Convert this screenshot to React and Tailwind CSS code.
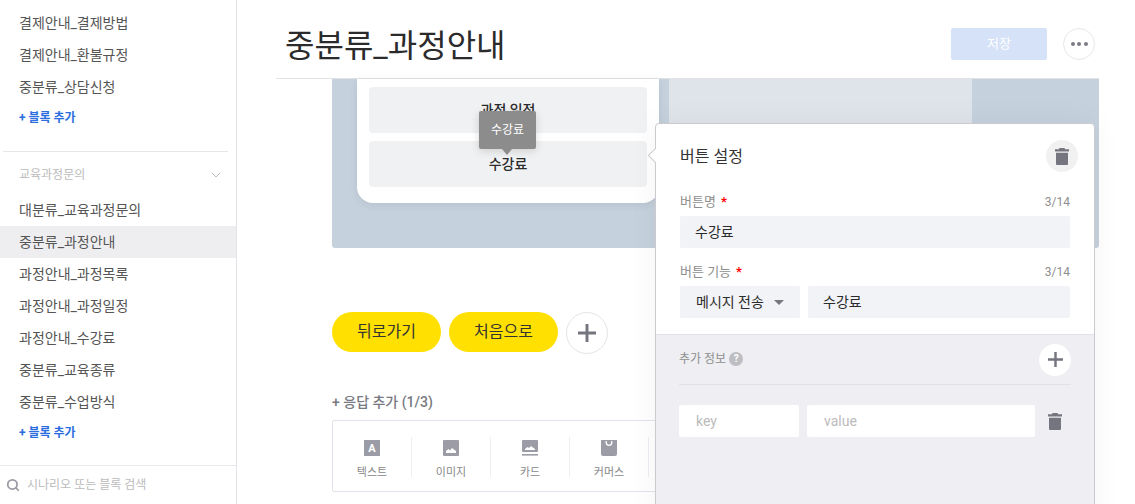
import React from 'react';
import { ChevronDown, Search } from 'lucide-react';

const TrashIcon = ({ className }) => (
  <svg viewBox="0 0 14 17" className={className} fill="currentColor">
    <path d="M4.5 0h5l.6 1.2H14v2.3H0V1.2h3.9zM1 4.8h12V16a1 1 0 0 1-1 1H2a1 1 0 0 1-1-1z" />
  </svg>
);

const PlusIcon = ({ className }) => (
  <svg viewBox="0 0 16 16" className={className} fill="currentColor">
    <path d="M6.7 0h2.6v6.7H16v2.6H9.3V16H6.7V9.3H0V6.7h6.7z" />
  </svg>
);

const Star = () => <span className="text-[#ff0000] text-[13px] ml-[5px] font-bold">*</span>;

const SideItem = ({ label, active }) => (
  <div className={`h-8 flex items-center pl-[19px] text-[14px] text-[#555] ${active ? 'bg-[#eeeef1]' : ''}`}>
    {label}
  </div>
);

const AddBlock = () => (
  <div className="h-7 pt-[2px] flex items-center pl-[19px] text-[12px] font-bold text-[#2a6ee0]">+ 블록 추가</div>
);

function Sidebar() {
  return (
    <aside className="w-[237px] shrink-0 h-full border-r border-[#e3e3e9] flex flex-col bg-white">
      <div className="flex-1 pt-[7px]">
        <SideItem label="결제안내_결제방법" />
        <SideItem label="결제안내_환불규정" />
        <SideItem label="중분류_상담신청" />
        <AddBlock />
        <div className="mt-[20px] mx-[3px] w-[225px] border-t border-[#e6e6ea]" />
        <div className="h-[42px] pt-[3px] flex items-center justify-between pl-[19px] pr-[13px] text-[12px] text-[#bbb]">
          <span>교육과정문의</span>
          <ChevronDown size={16} strokeWidth={1.5} className="text-[#bbb] -mr-[1px]" />
        </div>
        <SideItem label="대분류_교육과정문의" />
        <SideItem label="중분류_과정안내" active />
        <SideItem label="과정안내_과정목록" />
        <SideItem label="과정안내_과정일정" />
        <SideItem label="과정안내_수강료" />
        <SideItem label="중분류_교육종류" />
        <SideItem label="중분류_수업방식" />
        <AddBlock />
      </div>
      <div className="h-[39px] shrink-0 border-t border-[#e9e9ec] flex items-center pl-[6px] gap-[7px] text-[12px] text-[#bbb]">
        <Search size={14} strokeWidth={3} className="text-[#9a9ba3]" />
        <span>시나리오 또는 블록 검색</span>
      </div>
    </aside>
  );
}

const ReplyIcon = ({ type }) => {
  if (type === 'text') {
    return (
      <div className="w-4 h-4 bg-[#9b9ca5] flex items-center justify-center text-white text-[11px] font-bold leading-none">A</div>
    );
  }
  if (type === 'commerce') {
    return (
      <svg viewBox="0 0 16 16" className="w-4 h-4">
        <path d="M0 0h16v14a2 2 0 0 1-2 2H2a2 2 0 0 1-2-2z" fill="#9b9ca5" />
        <path d="M5.2 1v1.6a2.8 2.8 0 0 0 5.6 0V1" fill="none" stroke="#fff" strokeWidth="1.3" />
      </svg>
    );
  }
  return (
    <svg viewBox="0 0 16 16" className="w-4 h-4">
      <rect width="16" height={type === 'card' ? 12 : 16} rx="1" fill="#9b9ca5" />
      {type === 'card' ? (
        <>
          <path d="M3 10V9l2.5-2L7 8l2-2 4 3v1z" fill="#fff" />
          <rect y="14" width="16" height="1.6" fill="#9b9ca5" />
        </>
      ) : (
        <path d="M3 13v-2l2.5-2L7 10.500l2-2.500 4 3v2z" fill="#fff" />
      )}
    </svg>
  );
};

const ReplyCell = ({ type, label }) => (
  <div className="w-[79px] shrink-0 h-10 border-r border-[#eeeef2] flex flex-col items-center justify-start text-[11px] text-[#888] leading-none">
    <div className="mt-[3px]"><ReplyIcon type={type} /></div>
    <span className="mt-[11px]">{label}</span>
  </div>
);

function Popover() {
  return (
    <div className="absolute left-[655px] top-[123px] w-[440px] h-[420px] bg-white border border-[#cacacf] rounded-[4px] shadow-[0_0_30px_rgba(0,0,0,0.05)]">
      <div className="absolute -left-[6px] top-[26px] w-[11px] h-[11px] rotate-45 bg-white border-l border-b border-[#cacacf]" />
      <div className="relative px-6">
        <div className="flex items-center justify-between h-[32px] mt-[16px] -mr-[8px]">
          <span className="text-[16px] text-[#333] pt-[2px]">버튼 설정</span>
          <div className="w-8 h-8 rounded-full bg-[#f1f1f1] flex items-center justify-center">
            <TrashIcon className="w-[14px] h-[17px] text-[#74757f]" />
          </div>
        </div>
        <div className="mt-[20px] flex items-center justify-between h-[20px] text-[12px] text-[#8e8e8e]">
          <span className="text-[13px] flex items-center">버튼명<Star /></span>
          <span>3/14</span>
        </div>
        <div className="mt-[4px] h-8 bg-[#f2f3f7] rounded-[2px] flex items-center pl-[15px] text-[14px] text-[#2b2b2b]">수강료</div>
        <div className="mt-[14px] flex items-center justify-between h-[20px] text-[12px] text-[#8e8e8e]">
          <span className="text-[13px] flex items-center">버튼 기능<Star /></span>
          <span>3/14</span>
        </div>
        <div className="mt-[4px] flex gap-2">
          <div className="w-[120px] h-8 bg-[#f2f3f7] rounded-[2px] flex items-center pl-4 text-[14px] text-[#2b2b2b]">
            메시지 전송
            <span className="ml-[10px] w-0 h-0 border-x-[5px] border-x-transparent border-t-[5px] border-t-[#77787f]" />
          </div>
          <div className="flex-1 h-8 bg-[#f2f3f7] rounded-[2px] flex items-center pl-[15px] text-[14px] text-[#2b2b2b]">수강료</div>
        </div>
      </div>
      <div className="mt-4 h-[200px] bg-[#eeeef3] border-t border-[#e2e2e6] pl-[23px] pr-[23px]">
        <div className="h-[50px] border-b border-[#e2e2e6] flex items-center justify-between">
          <span className="flex items-center text-[12px] text-[#8e8e8e] gap-[3px] -mt-[2px]">
            추가 정보
            <span className="w-[14px] h-[14px] rounded-full bg-[#bdbdc2] text-white text-[10px] font-bold flex items-center justify-center">?</span>
          </span>
          <div className="w-8 h-8 rounded-full bg-white flex items-center justify-center">
            <PlusIcon className="w-[15px] h-[15px] text-[#74757f]" />
          </div>
        </div>
        <div className="mt-[20px] flex items-center gap-2">
          <div className="w-[120px] h-8 bg-white rounded-[2px] flex items-center pl-[17px] text-[14px] text-[#bbb]">key</div>
          <div className="w-[228px] h-8 bg-white rounded-[2px] flex items-center pl-[17px] text-[14px] text-[#bbb]">value</div>
          <TrashIcon className="w-[14px] h-[17px] ml-[5px] text-[#74757f]" />
        </div>
      </div>
    </div>
  );
}

export default function App() {
  return (
    <div className="relative w-[1135px] h-[504px] overflow-hidden flex bg-white font-['Roboto','Noto_Sans_CJK_KR',sans-serif]">
      <Sidebar />
      <main className="ml-[39px] w-[823px] shrink-0">
        <header className="h-[79px] border-b border-[#e2e2e2] flex items-start pl-[9px] pr-1 pt-[28px]">
          <h1 className="text-[32px] text-[#2b2b2b] leading-none pt-[2px] font-normal">중분류_과정안내</h1>
          <button className="ml-auto w-[96px] h-8 bg-[#d6e2f8] rounded-[2px] text-white text-[13px]">저장</button>
          <button className="ml-4 w-8 h-8 rounded-full border border-[#e8e8ea] flex items-center justify-center gap-[2.5px]">
            <span className="w-[4px] h-[4px] rounded-full bg-[#7b7c85]" />
            <span className="w-[4px] h-[4px] rounded-full bg-[#7b7c85]" />
            <span className="w-[4px] h-[4px] rounded-full bg-[#7b7c85]" />
          </button>
        </header>

        <div className="ml-[56px]">
          <div className="h-[169px] bg-[#c5d1dd] rounded-b-[3px] pl-[25px] flex items-start gap-[10px]">
            <div className="relative w-[302px] h-[124px] bg-white rounded-b-[16px] shadow-[0_2px_8px_rgba(0,0,0,0.08)] px-3 pt-2 flex flex-col gap-2">
              <div className="h-[46px] rounded-[4px] bg-[#f0f1f3] flex items-center justify-center text-[14px] font-medium text-[#2b2b2b]">과정 일정</div>
              <div className="h-[46px] rounded-[4px] bg-[#f0f1f3] flex items-center justify-center text-[14px] font-medium text-[#2b2b2b]">수강료</div>
              <div className="absolute left-[122px] top-[32px] w-[57px] h-[38px] rounded-[2px] bg-[#8c8c8c] text-white text-[12px] flex items-center justify-center shadow-[0_2px_8px_rgba(0,0,0,0.15)]">
                수강료
                <span className="absolute left-[23px] -bottom-[6px] w-0 h-0 border-x-[5px] border-x-transparent border-t-[6px] border-t-[#8c8c8c]" />
              </div>
            </div>
            <div className="w-[303px] h-[124px] bg-[#dfe3ea]" />
          </div>

          <div className="mt-[64px] flex items-start gap-2">
            <div className="w-[109px] h-10 rounded-full bg-[#ffe000] flex items-center justify-center text-[16px] text-[#333]">뒤로가기</div>
            <div className="w-[109px] h-10 rounded-full bg-[#ffe000] flex items-center justify-center text-[16px] text-[#333]">처음으로</div>
            <div className="w-[42px] h-[42px] rounded-full border border-[#e4e4ea] flex items-center justify-center">
              <PlusIcon className="w-[18px] h-[18px] text-[#74757f]" />
            </div>
          </div>

          <div className="mt-[38px] text-[14px] font-medium text-[#777880] leading-5">+ 응답 추가 (1/3)</div>
          <div className="mt-2 h-[72px] w-[740px] border border-[#e2e2ea] rounded-[2px] pt-[2px] flex items-center">
            <ReplyCell type="text" label="텍스트" />
            <ReplyCell type="image" label="이미지" />
            <ReplyCell type="card" label="카드" />
            <ReplyCell type="commerce" label="커머스" />
          </div>
        </div>
      </main>
      <Popover />
    </div>
  );
}
